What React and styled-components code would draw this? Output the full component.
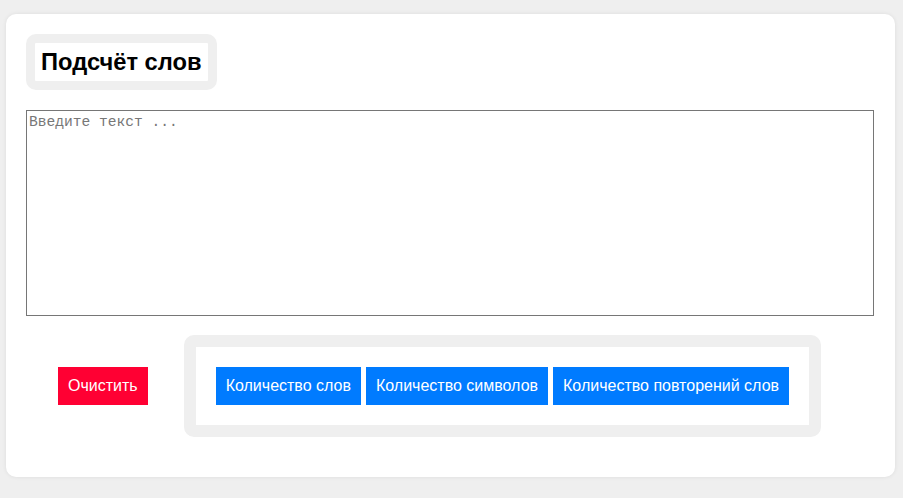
import React from "react";
import styled, { createGlobalStyle } from "styled-components";

const Global = createGlobalStyle`
  html, body { margin: 0; padding: 0; background: #efefef; }
  body { font-family: "Liberation Sans", Arial, sans-serif; }
  * { box-sizing: border-box; }
`;

const Page = styled.div`
  padding: 14px 8px 21px 6px;
`;

const Card = styled.div`
  background: #fff;
  border-radius: 10px;
  box-shadow: 0 0 4px rgba(0, 0, 0, 0.08);
  padding: 20px 21px 40px 20px;
  display: flex;
  flex-direction: column;
  align-items: flex-start;
`;

const TitleBox = styled.div`
  border: 9px solid #efefef;
  border-radius: 10px;
  background: #fff;
`;

const Title = styled.h2`
  margin: 0;
  padding: 5px 6px;
  font-size: 23.7px;
  font-weight: bold;
  line-height: 28px;
  color: #000;
`;

const TextArea = styled.textarea`
  margin-top: 20px;
  width: 100%;
  height: 206px;
  border: 1px solid #767676;
  padding: 3px 2px;
  font-family: "Liberation Mono", "DejaVu Sans Mono", monospace;
  font-size: 14.6px;
  line-height: 17px;
  resize: none;
  outline: none;
  &::placeholder { color: #777; }
`;

const Controls = styled.div`
  margin-top: 19px;
  padding-left: 32px;
  display: flex;
  align-items: center;
  gap: 36px;
`;

const Button = styled.button`
  border: none;
  border-radius: 0;
  margin: 0;
  padding: 10px 10px;
  font-family: "Liberation Sans", Arial, sans-serif;
  font-size: 16px;
  line-height: 18px;
  color: #fff;
  background: ${(p) => (p.$danger ? "#ff0033" : "#007bff")};
  cursor: pointer;
  white-space: nowrap;
`;

const ActionBox = styled.div`
  border: 12px solid #efefef;
  border-radius: 10px;
  padding: 20px;
  display: flex;
  gap: 5px;
`;

export default function App() {
  return (
    <Page>
      <Global />
      <Card>
        <TitleBox>
          <Title>Подсчёт слов</Title>
        </TitleBox>
        <TextArea placeholder="Введите текст ..." />
        <Controls>
          <Button $danger>Очистить</Button>
          <ActionBox>
            <Button>Количество слов</Button>
            <Button>Количество символов</Button>
            <Button>Количество повторений слов</Button>
          </ActionBox>
        </Controls>
      </Card>
    </Page>
  );
}
